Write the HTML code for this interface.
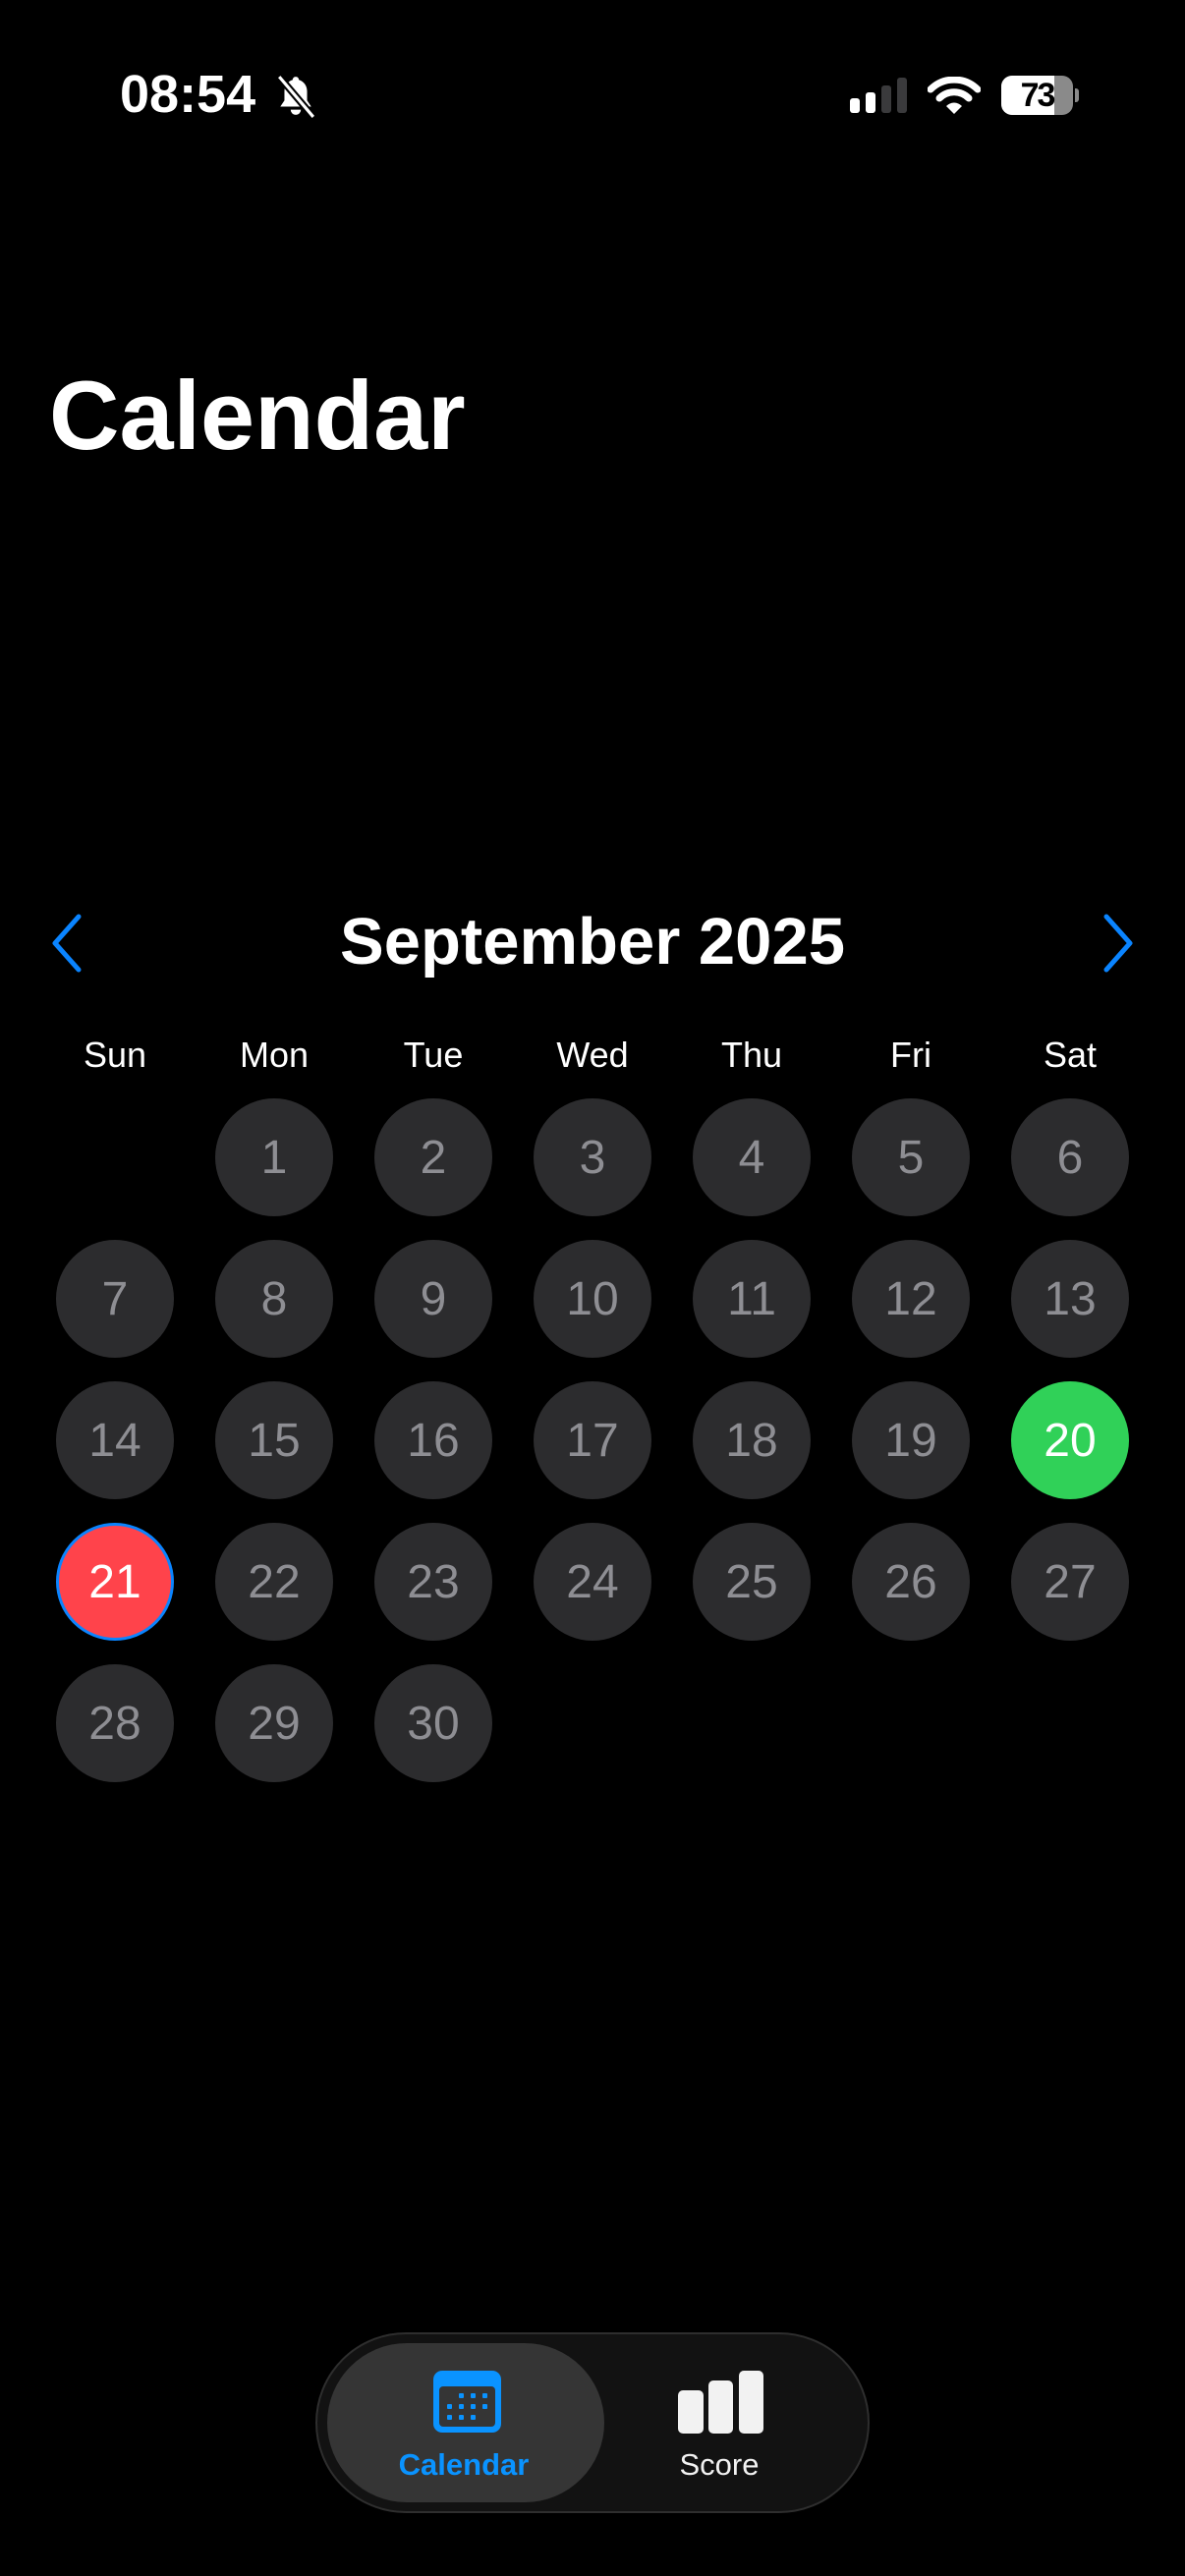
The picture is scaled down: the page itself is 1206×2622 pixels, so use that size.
<!DOCTYPE html>
<html><head><meta charset="utf-8"><style>
html,body{margin:0;padding:0;background:#000;}
body{width:1206px;height:2622px;position:relative;overflow:hidden;font-family:"Liberation Sans",sans-serif;color:#fff;}
.a{position:absolute;white-space:nowrap;}
.wd{position:absolute;top:1056px;width:160px;font-size:36px;line-height:36px;text-align:center;}
.c{position:absolute;width:120px;height:120px;border-radius:50%;background:#2c2c2e;color:#8e8e93;font-size:48px;display:flex;align-items:center;justify-content:center;box-sizing:border-box;}
</style></head><body>
<!-- status bar -->
<div class="a" style="left:122px;top:69px;font-size:54px;line-height:54px;font-weight:bold;">08:54</div>
<svg class="a" style="left:279px;top:74px" width="44" height="48" viewBox="0 0 42 44">
<path d="M21 3c-2 0-3 1.5-3 3 -5 1.5-8 6-8 11v9l-4 6h30l-4-6v-9c0-5-3-9.5-8-11 0-1.5-1-3-3-3z" fill="#fff"/>
<path d="M16 35a5 5 0 0 0 10 0z" fill="#fff"/>
<line x1="5" y1="3" x2="38" y2="42" stroke="#000" stroke-width="7"/>
<line x1="5" y1="3" x2="38" y2="42" stroke="#fff" stroke-width="3"/>
</svg>
<div class="a" style="left:865px;top:100px;width:10px;height:15px;background:#fff;border-radius:3px"></div>
<div class="a" style="left:881px;top:94px;width:10px;height:21px;background:#fff;border-radius:3px"></div>
<div class="a" style="left:897px;top:87px;width:10px;height:28px;background:#3a3a3c;border-radius:3px"></div>
<div class="a" style="left:913px;top:79px;width:10px;height:36px;background:#3a3a3c;border-radius:3px"></div>
<svg class="a" style="left:944px;top:78px" width="54" height="38" viewBox="0 0 54 38">
<path d="M3 13A34 34 0 0 1 51 13" stroke="#fff" stroke-width="7" fill="none" stroke-linecap="round"/>
<path d="M12 22A21 21 0 0 1 42 22" stroke="#fff" stroke-width="7" fill="none" stroke-linecap="round"/>
<path d="M19 30L27 38L35 30A11 11 0 0 0 19 30z" fill="#fff"/>
</svg>
<div class="a" style="left:1019px;top:77px;width:73px;height:40px;border-radius:11px;background:#8a8a8a;overflow:hidden">
<div style="width:54px;height:40px;background:#fff"></div></div>
<div class="a" style="left:1094px;top:90px;width:4px;height:14px;border-radius:0 3px 3px 0;background:#8a8a8a"></div>
<div class="a" style="left:1019px;top:79px;width:73px;text-align:center;font-size:34px;line-height:36px;font-weight:bold;color:#000;letter-spacing:-2px">73</div>

<div class="a" style="left:50px;top:373px;font-size:99px;line-height:99px;font-weight:bold;">Calendar</div>

<!-- month header -->
<svg class="a" style="left:48px;top:928px" width="40" height="64" viewBox="0 0 40 64"><path d="M32 5L8 32L32 59" stroke="#0a84ff" stroke-width="5" fill="none" stroke-linecap="round" stroke-linejoin="round"/></svg>
<svg class="a" style="left:1118px;top:928px" width="40" height="64" viewBox="0 0 40 64"><path d="M8 5L32 32L8 59" stroke="#0a84ff" stroke-width="5" fill="none" stroke-linecap="round" stroke-linejoin="round"/></svg>
<div class="a" style="left:0;width:1206px;text-align:center;top:925px;font-size:67px;line-height:67px;font-weight:bold;">September 2025</div>

<div class="wd" style="left:37px">Sun</div>
<div class="wd" style="left:199px">Mon</div>
<div class="wd" style="left:361px">Tue</div>
<div class="wd" style="left:523px">Wed</div>
<div class="wd" style="left:685px">Thu</div>
<div class="wd" style="left:847px">Fri</div>
<div class="wd" style="left:1009px">Sat</div>

<div class="c" style="left:219px;top:1118px">1</div>
<div class="c" style="left:381px;top:1118px">2</div>
<div class="c" style="left:543px;top:1118px">3</div>
<div class="c" style="left:705px;top:1118px">4</div>
<div class="c" style="left:867px;top:1118px">5</div>
<div class="c" style="left:1029px;top:1118px">6</div>

<div class="c" style="left:57px;top:1262px">7</div>
<div class="c" style="left:219px;top:1262px">8</div>
<div class="c" style="left:381px;top:1262px">9</div>
<div class="c" style="left:543px;top:1262px">10</div>
<div class="c" style="left:705px;top:1262px">11</div>
<div class="c" style="left:867px;top:1262px">12</div>
<div class="c" style="left:1029px;top:1262px">13</div>

<div class="c" style="left:57px;top:1406px">14</div>
<div class="c" style="left:219px;top:1406px">15</div>
<div class="c" style="left:381px;top:1406px">16</div>
<div class="c" style="left:543px;top:1406px">17</div>
<div class="c" style="left:705px;top:1406px">18</div>
<div class="c" style="left:867px;top:1406px">19</div>
<div class="c" style="left:1029px;top:1406px;background:#30d158;color:#fff">20</div>

<div class="c" style="left:57px;top:1550px;background:#ff434b;color:#fff;border:3px solid #0a84ff">21</div>
<div class="c" style="left:219px;top:1550px">22</div>
<div class="c" style="left:381px;top:1550px">23</div>
<div class="c" style="left:543px;top:1550px">24</div>
<div class="c" style="left:705px;top:1550px">25</div>
<div class="c" style="left:867px;top:1550px">26</div>
<div class="c" style="left:1029px;top:1550px">27</div>

<div class="c" style="left:57px;top:1694px">28</div>
<div class="c" style="left:219px;top:1694px">29</div>
<div class="c" style="left:381px;top:1694px">30</div>

<!-- tab bar -->
<div class="a" style="left:321px;top:2374px;width:564px;height:184px;border-radius:92px;background:#121212;border:2px solid #2e2e2e;box-sizing:border-box"></div>
<div class="a" style="left:333px;top:2385px;width:282px;height:162px;border-radius:81px;background:#353535"></div>
<svg class="a" style="left:441px;top:2413px" width="69" height="63" viewBox="0 0 69 63">
<rect x="0" y="0" width="69" height="63" rx="9" fill="#0a93ff"/>
<rect x="6" y="16" width="57" height="41" rx="4" fill="#353535"/>
<g fill="#0a93ff">
<rect x="26" y="23" width="5" height="5" rx="1"/><rect x="38" y="23" width="5" height="5" rx="1"/><rect x="50" y="23" width="5" height="5" rx="1"/>
<rect x="14" y="34" width="5" height="5" rx="1"/><rect x="26" y="34" width="5" height="5" rx="1"/><rect x="38" y="34" width="5" height="5" rx="1"/><rect x="50" y="34" width="5" height="5" rx="1"/>
<rect x="14" y="45" width="5" height="5" rx="1"/><rect x="26" y="45" width="5" height="5" rx="1"/><rect x="38" y="45" width="5" height="5" rx="1"/>
</g></svg>
<div class="a" style="left:372px;width:200px;text-align:center;top:2493px;font-size:31px;line-height:31px;font-weight:bold;color:#0a93ff">Calendar</div>
<div class="a" style="left:690px;top:2433px;width:26px;height:44px;border-radius:5px;background:#f2f2f2"></div>
<div class="a" style="left:721px;top:2423px;width:25px;height:54px;border-radius:5px;background:#f2f2f2"></div>
<div class="a" style="left:752px;top:2413px;width:25px;height:64px;border-radius:5px;background:#f2f2f2"></div>
<div class="a" style="left:632px;width:200px;text-align:center;top:2493px;font-size:31px;line-height:31px;color:#f2f2f2">Score</div>
</body></html>
